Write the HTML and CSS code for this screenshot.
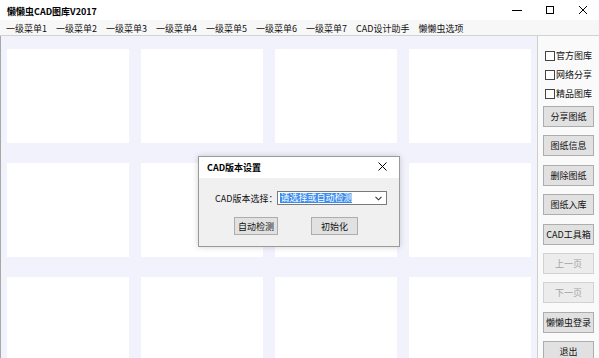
FILE: index.html
```html
<!DOCTYPE html>
<html lang="zh-CN">
<head>
    <meta charset="UTF-8">
    <meta name="viewport" content="width=device-width, initial-scale=1.0">
    <title>懒懒虫CAD图库V2017</title>
    <link rel="stylesheet" href="styles.css">
</head>
<body>
    <div class="window">
        <div class="titlebar">
            <span class="app-title">懒懒虫CAD图库V2017</span>
            <div class="controls">
                <span class="ctl">
                    <svg width="10" height="10" viewBox="0 0 10 10"><path d="M0 5.5H10" stroke="#000" stroke-width="1"/></svg>
                </span>
                <span class="ctl">
                    <svg width="10" height="10" viewBox="0 0 10 10"><rect x="1.5" y="1.5" width="7" height="7" fill="none" stroke="#000" stroke-width="1"/></svg>
                </span>
                <span class="ctl">
                    <svg width="10" height="10" viewBox="0 0 10 10"><path d="M1 1L9 9M9 1L1 9" stroke="#000" stroke-width="1"/></svg>
                </span>
            </div>
        </div>

        <div class="menubar">
            <span class="menu-item">一级菜单1</span>
            <span class="menu-item">一级菜单2</span>
            <span class="menu-item">一级菜单3</span>
            <span class="menu-item">一级菜单4</span>
            <span class="menu-item">一级菜单5</span>
            <span class="menu-item">一级菜单6</span>
            <span class="menu-item">一级菜单7</span>
            <span class="menu-item">CAD设计助手</span>
            <span class="menu-item">懒懒虫选项</span>
        </div>

        <div class="main">
            <div class="gallery">
                <div class="tile"></div>
                <div class="tile"></div>
                <div class="tile"></div>
                <div class="tile"></div>
                <div class="tile"></div>
                <div class="tile"></div>
                <div class="tile"></div>
                <div class="tile"></div>
                <div class="tile"></div>
                <div class="tile"></div>
                <div class="tile"></div>
                <div class="tile"></div>
            </div>

            <div class="side">
                <label class="check"><span class="box"></span>官方图库</label>
                <label class="check"><span class="box"></span>网络分享</label>
                <label class="check"><span class="box"></span>精品图库</label>
                <div class="side-buttons">
                    <button class="side-btn">分享图纸</button>
                    <button class="side-btn">图纸信息</button>
                    <button class="side-btn">删除图纸</button>
                    <button class="side-btn">图纸入库</button>
                    <button class="side-btn">CAD工具箱</button>
                    <button class="side-btn disabled">上一页</button>
                    <button class="side-btn disabled">下一页</button>
                    <button class="side-btn">懒懒虫登录</button>
                    <button class="side-btn">退出</button>
                </div>
            </div>

            <!-- version dialog over the gallery -->
            <div class="dialog">
                <div class="dialog-title">
                    <span>CAD版本设置</span>
                    <svg class="dialog-close" width="9" height="9" viewBox="0 0 9 9"><path d="M0.5 0.5L8.5 8.5M8.5 0.5L0.5 8.5" stroke="#000" stroke-width="1"/></svg>
                </div>
                <div class="dialog-body">
                    <div class="field">
                        <span class="field-label">CAD版本选择：</span>
                        <div class="combo">
                            <span class="combo-text">请选择或自动检测</span>
                            <svg class="combo-arrow" width="7" height="5" viewBox="0 0 7 5"><path d="M0.5 0.8L3.5 3.8L6.5 0.8" fill="none" stroke="#333" stroke-width="1.1"/></svg>
                        </div>
                    </div>
                    <div class="btn-row">
                        <button class="dlg-btn detect">自动检测</button>
                        <button class="dlg-btn init">初始化</button>
                    </div>
                </div>
            </div>
        </div>
    </div>
</body>
</html>
```

FILE: styles.css
```css
body {
    margin: 0;
    font-family: "Noto Sans CJK SC", "Liberation Sans", sans-serif;
    font-size: 9px;
    color: #111;
    background: #fff;
}

.window {
    width: 599px;
    height: 358px;
    overflow: hidden;
    display: flex;
    flex-direction: column;
}

.titlebar {
    height: 20px;
    display: flex;
    align-items: center;
    justify-content: space-between;
    background: #fff;
}

.app-title {
    padding: 2px 0 0 7px;
    font-weight: bold;
    color: #000;
}

.controls {
    display: flex;
    height: 100%;
}

.ctl {
    width: 33px;
    display: flex;
    align-items: center;
    justify-content: center;
}

.menubar {
    height: 14px;
    display: flex;
    align-items: center;
    gap: 9px;
    padding: 1px 0 0 6px;
    background: #f7f7f7;
    border-bottom: 1px solid #d2d2d2;
}

.menu-item {
    color: #111;
    white-space: nowrap;
}

.main {
    position: relative;
    flex: 1;
    display: flex;
    min-height: 0;
}

.gallery {
    flex: 1;
    display: grid;
    grid-template-columns: repeat(4, 122px);
    grid-auto-rows: 94px;
    gap: 20px 12px;
    padding: 13px 0 0 6px;
    background: #f2f2fc;
    border-left: 1px solid #a8a8a8;
    overflow: hidden;
}

.tile {
    background: #fff;
}

.side {
    width: 61px;
    border-left: 1px solid #cfcfcf;
    background: #fafafa;
    padding-top: 10px;
    display: flex;
    flex-direction: column;
}

.check {
    display: flex;
    align-items: center;
    height: 19px;
    flex-shrink: 0;
    padding-left: 7px;
    color: #111;
    white-space: nowrap;
}

.box {
    width: 8px;
    height: 8px;
    border: 1px solid #444;
    background: #fff;
    margin-right: 1px;
}

.side-buttons {
    display: flex;
    flex-direction: column;
    gap: 8.4px;
    margin-top: 3px;
    padding-left: 5px;
}

.side-btn {
    width: 51px;
    height: 21px;
    flex-shrink: 0;
    padding: 0;
    font-family: inherit;
    font-size: 9px;
    color: #111;
    background: #e1e1e1;
    border: 1px solid #adadad;
    white-space: nowrap;
}

.side-btn.disabled {
    color: #a3a3a3;
    background: #ececec;
    border-color: #d2d2d2;
}

.dialog {
    position: absolute;
    left: 198px;
    top: 120px;
    width: 200px;
    height: 89px;
    border: 1px solid #9a9a9a;
    background: #f0f0f0;
    box-shadow: 0 0 6px rgba(0, 0, 0, 0.18);
    display: flex;
    flex-direction: column;
}

.dialog-title {
    height: 21px;
    background: #fff;
    display: flex;
    align-items: center;
    justify-content: space-between;
    padding: 0 12px 0 8px;
    font-weight: bold;
    color: #000;
}

.dialog-close {
    margin-top: -3px;
}

.dialog-body {
    flex: 1;
    padding: 13px 16px 0 16px;
}

.field {
    display: flex;
    align-items: center;
    height: 14px;
}

.field-label {
    color: #111;
    white-space: nowrap;
}

.combo {
    margin-left: auto;
    flex-shrink: 0;
    width: 106px;
    height: 12px;
    border: 1px solid #7a7a7a;
    background: #fff;
    display: flex;
    align-items: center;
    justify-content: space-between;
    padding: 0 0 0 2px;
}

.combo-text {
    background: #3b8cf0;
    color: #fff;
    line-height: 10px;
    height: 10px;
    white-space: nowrap;
}

.combo-arrow {
    margin-right: 4px;
}

.btn-row {
    display: flex;
    gap: 33px;
    margin-top: 12px;
    padding-left: 19px;
}

.dlg-btn {
    height: 18px;
    padding: 0;
    font-family: inherit;
    font-size: 9px;
    color: #111;
    background: #e1e1e1;
    border: 1px solid #adadad;
}

.dlg-btn.detect {
    width: 44px;
}

.dlg-btn.init {
    width: 47px;
}
```
